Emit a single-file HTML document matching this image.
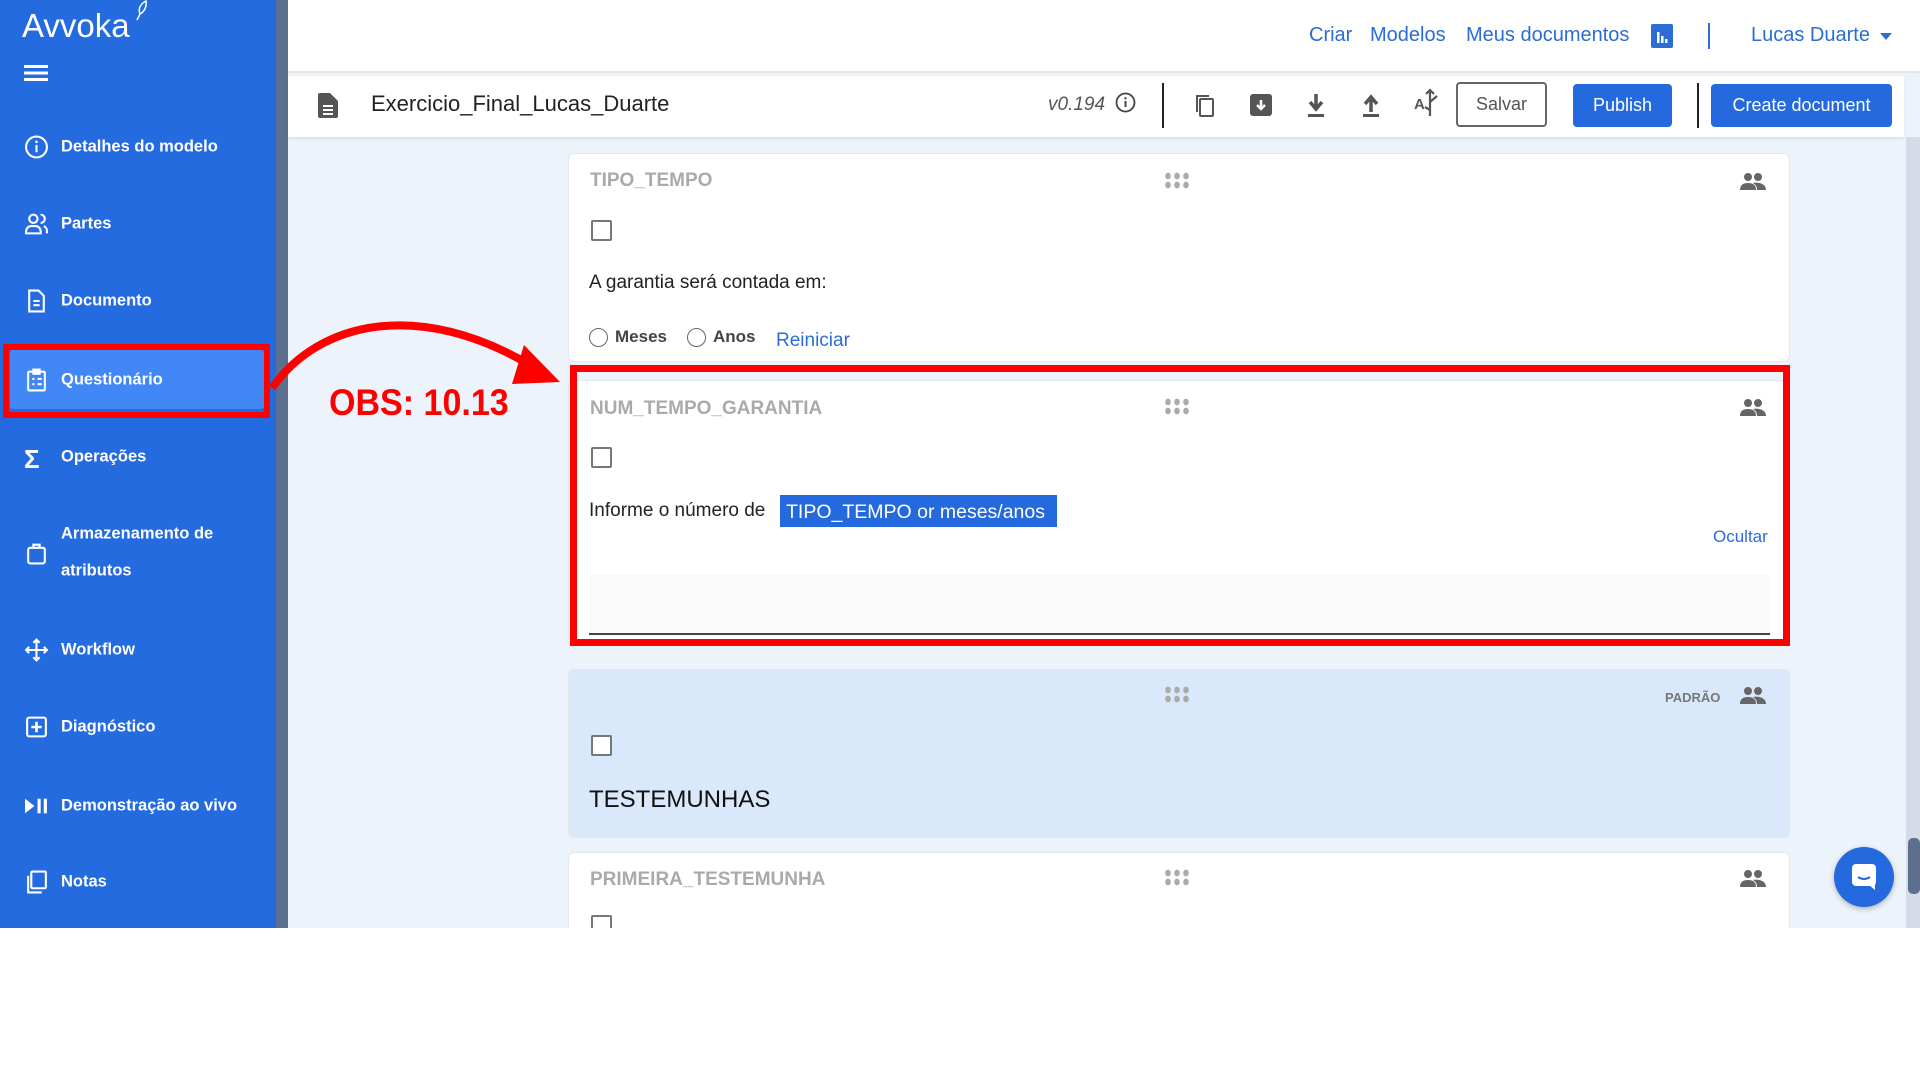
<!DOCTYPE html>
<html><head><meta charset="utf-8"><style>
*{box-sizing:border-box;margin:0;padding:0}
body{width:1920px;height:1080px;background:#fff;font-family:"Liberation Sans",sans-serif;position:relative;overflow:hidden}
.abs{position:absolute}
#side{left:0;top:0;width:276px;height:928px;background:#256be0}
#sb{left:276px;top:0;width:12px;height:928px;background:#5d6f8e}
#main{left:288px;top:0;width:1632px;height:928px;background:#edf3fb}
#hdr{left:288px;top:0;width:1632px;height:73px;background:#fff;border-bottom:2px solid #e6e6e6}
#tb{left:288px;top:76px;width:1616px;height:61px;background:#fff;box-shadow:0 2px 3px rgba(0,0,0,.08)}
.nav{color:#2c6cd6;font-size:20px;top:24px}
.mi{left:61px;color:#fff;font-size:16.5px;font-weight:bold;transform:translateY(-50%)}
.ic{left:24px;width:25px;height:25px;transform:translateY(-50%)}
.card{left:568px;width:1222px;background:#fff;border-radius:6px;border:1px solid #e3e8ef}
.lab{color:#aaa;font-size:19px;font-weight:bold}
.cb{width:21px;height:21px;border:2px solid #777;border-radius:2px;background:#fff}
.txt{font-size:19px;color:#222}
.btn{border-radius:4px;font-size:18px;display:flex;align-items:center;justify-content:center}
</style></head><body>
<div id="side" class="abs"></div>
<div id="sb" class="abs"></div>
<div id="main" class="abs"></div>
<div id="hdr" class="abs"></div>
<div id="tb" class="abs"></div>

<div class="abs" style="left:22px;top:7px;color:#fff;font-size:33px">Avvoka</div>
<svg class="abs" style="left:134px;top:0" width="16" height="22" fill="none" stroke="#fff" stroke-width="1.5"><path d="M12 1c-6 3-8 8-6 13 4-2 7-7 6-13zM6 14l-3 6"/></svg>
<svg class="abs" style="left:24px;top:64px" width="24" height="18"><rect y="1" width="24" height="3" fill="#fff"/><rect y="7.5" width="24" height="3" fill="#fff"/><rect y="14" width="24" height="3" fill="#fff"/></svg>

<div class="abs" style="left:10px;top:350px;width:254px;height:59px;background:#4188f6;border-radius:3px"></div>
<div class="abs" style="left:3px;top:344px;width:267px;height:74px;border:6px solid #ff0000"></div>

<svg class="abs ic" style="top:147px" viewBox="0 0 24 24"><circle cx="12" cy="12" r="10" fill="none" stroke="#fff" stroke-width="2"/><rect x="11" y="10" width="2" height="7" fill="#fff"/><circle cx="12" cy="7" r="1.3" fill="#fff"/></svg>
<div class="abs mi" style="top:147px">Detalhes do modelo</div>
<svg class="abs ic" style="top:224px" viewBox="0 0 24 24" fill="none" stroke="#fff" stroke-width="2"><circle cx="9" cy="7" r="4"/><path d="M2 21v-2a5 5 0 0 1 5-5h4a5 5 0 0 1 5 5v2z"/><path d="M16 3a4 4 0 0 1 0 8M19 14a5 5 0 0 1 3 5v2"/></svg>
<div class="abs mi" style="top:224px">Partes</div>
<svg class="abs ic" style="top:301px" viewBox="0 0 24 24" fill="none" stroke="#fff" stroke-width="2"><path d="M5 2h9l5 5v15H5z"/><path d="M9 12h6M9 16h6"/></svg>
<div class="abs mi" style="top:301px">Documento</div>
<svg class="abs ic" style="top:380px" viewBox="0 0 24 24" fill="none" stroke="#fff" stroke-width="2"><rect x="4" y="4" width="16" height="18" rx="1"/><rect x="9" y="2" width="6" height="4" fill="#fff"/><path d="M8 11h2M13 11h4M8 16h2M13 16h4"/></svg>
<div class="abs mi" style="top:380px">Questionário</div>
<div class="abs" style="left:24px;top:444px;color:#fff;font-size:26px;font-weight:bold">Σ</div>
<div class="abs mi" style="top:457px">Operações</div>
<svg class="abs ic" style="top:553px" viewBox="0 0 24 24" fill="none" stroke="#fff" stroke-width="2"><rect x="4" y="7" width="16" height="15" rx="2"/><path d="M9 7V4h6v3"/></svg>
<div class="abs mi" style="top:534px">Armazenamento de</div>
<div class="abs mi" style="top:571px">atributos</div>
<svg class="abs ic" style="top:650px" viewBox="0 0 24 24" fill="none" stroke="#fff" stroke-width="2"><path d="M12 2v20M2 12h20M9 5l3-3 3 3M9 19l3 3 3-3M5 9l-3 3 3 3M19 9l3 3-3 3"/></svg>
<div class="abs mi" style="top:650px">Workflow</div>
<svg class="abs ic" style="top:727px" viewBox="0 0 24 24"><rect x="3" y="3" width="18" height="18" rx="2" fill="none" stroke="#fff" stroke-width="2"/><path d="M12 7v10M7 12h10" stroke="#fff" stroke-width="2.5"/></svg>
<div class="abs mi" style="top:727px">Diagnóstico</div>
<svg class="abs ic" style="top:806px" viewBox="0 0 24 24" fill="#fff"><path d="M1 5l9 7-9 7z"/><rect x="13" y="5" width="3" height="14"/><rect x="19" y="5" width="3" height="14"/></svg>
<div class="abs mi" style="top:806px">Demonstração ao vivo</div>
<svg class="abs ic" style="top:882px" viewBox="0 0 24 24" fill="none" stroke="#fff" stroke-width="2"><rect x="7" y="2" width="14" height="16" rx="1"/><path d="M4 6v16h13"/></svg>
<div class="abs mi" style="top:882px">Notas</div>

<div class="abs nav" style="left:1309px">Criar</div>
<div class="abs nav" style="left:1370px">Modelos</div>
<div class="abs nav" style="left:1466px">Meus documentos</div>
<svg class="abs" style="left:1651px;top:24px" width="22" height="24"><rect width="22" height="24" rx="2" fill="#2c6cd6"/><rect x="6" y="8" width="2.5" height="11" fill="#fff"/><rect x="10" y="12" width="2.5" height="7" fill="#fff"/><rect x="14" y="15" width="2.5" height="4" fill="#fff"/></svg>
<div class="abs" style="left:1708px;top:23px;width:2px;height:26px;background:#2c6cd6"></div>
<div class="abs nav" style="left:1751px">Lucas Duarte</div>
<div class="abs" style="left:1880px;top:33px;width:0;height:0;border-left:6px solid transparent;border-right:6px solid transparent;border-top:7px solid #2c6cd6"></div>

<svg class="abs" style="left:318px;top:93px" width="20" height="25" viewBox="0 0 20 25"><path d="M0 2a2 2 0 0 1 2-2h10l8 8v15a2 2 0 0 1-2 2H2a2 2 0 0 1-2-2z" fill="#555"/><path d="M5 13h10M5 17h10M5 21h10" stroke="#fff" stroke-width="2"/></svg>
<div class="abs" style="left:371px;top:91px;font-size:22px;color:#222">Exercicio_Final_Lucas_Duarte</div>
<div class="abs" style="left:1048px;top:94px;font-size:19px;color:#555;font-style:italic">v0.194</div>
<svg class="abs" style="left:1115px;top:92px" width="21" height="21"><circle cx="10.5" cy="10.5" r="9" fill="none" stroke="#444" stroke-width="1.8"/><rect x="9.5" y="9" width="2" height="6" fill="#444"/><circle cx="10.5" cy="6.3" r="1.2" fill="#444"/></svg>
<div class="abs" style="left:1162px;top:83px;width:2px;height:45px;background:#222"></div>
<svg class="abs" style="left:1194px;top:93px" width="22" height="25" fill="none" stroke="#555" stroke-width="2"><rect x="6" y="6" width="13" height="17" rx="1"/><path d="M3 19V3h12"/></svg>
<svg class="abs" style="left:1249px;top:93px" width="24" height="24"><rect x="1" y="1" width="22" height="22" rx="3" fill="#555"/><path d="M12 7v9M8 12l4 4 4-4" stroke="#fff" stroke-width="2.5" fill="none"/></svg>
<svg class="abs" style="left:1305px;top:92px" width="22" height="26"><path d="M11 2v14M5 10l6 7 6-7" stroke="#555" stroke-width="3.5" fill="none"/><rect x="3" y="22" width="16" height="3" fill="#555"/></svg>
<svg class="abs" style="left:1360px;top:92px" width="22" height="26"><path d="M11 20V6M5 12l6-7 6 7" stroke="#555" stroke-width="3.5" fill="none"/><rect x="3" y="22" width="16" height="3" fill="#555"/></svg>
<div class="abs" style="left:1414px;top:96px;font-size:15px;font-weight:bold;color:#555">A</div>
<svg class="abs" style="left:1420px;top:88px" width="20" height="30" fill="none" stroke="#555" stroke-width="2.2"><path d="M10 2v26M6 6l4-4 4 4M10 14l7-6M10 22l-5-3"/></svg>
<div class="abs btn" style="left:1456px;top:82px;width:91px;height:45px;border:2px solid #666;color:#555">Salvar</div>
<div class="abs btn" style="left:1573px;top:84px;width:99px;height:43px;background:#2469de;color:#fff">Publish</div>
<div class="abs" style="left:1697px;top:83px;width:2px;height:45px;background:#222"></div>
<div class="abs btn" style="left:1711px;top:84px;width:181px;height:43px;background:#2469de;color:#fff">Create document</div>

<div class="abs" style="left:1906px;top:137px;width:14px;height:791px;background:#d5dce8"></div>
<div class="abs" style="left:1908px;top:838px;width:12px;height:56px;background:#5d6f8e;border-radius:5px"></div>

<div class="abs card" style="top:153px;height:209px"></div>
<div class="abs lab" style="left:590px;top:170px">TIPO_TEMPO</div>
<div class="abs cb" style="left:591px;top:220px"></div>
<div class="abs txt" style="left:589px;top:272px">A garantia será contada em:</div>
<div class="abs" style="left:589px;top:328px;width:19px;height:19px;border:1.5px solid #666;border-radius:50%"></div>
<div class="abs" style="left:615px;top:327px;font-size:17px;font-weight:bold;color:#444">Meses</div>
<div class="abs" style="left:687px;top:328px;width:19px;height:19px;border:1.5px solid #666;border-radius:50%"></div>
<div class="abs" style="left:713px;top:327px;font-size:17px;font-weight:bold;color:#444">Anos</div>
<div class="abs" style="left:776px;top:330px;font-size:19px;color:#2c6cd6">Reiniciar</div>

<div class="abs card" style="top:380px;height:263px"></div>
<div class="abs lab" style="left:590px;top:398px">NUM_TEMPO_GARANTIA</div>
<div class="abs cb" style="left:591px;top:447px"></div>
<div class="abs txt" style="left:589px;top:500px">Informe o número de</div>
<div class="abs" style="left:780px;top:495px;width:277px;height:32px;background:#2469de;color:#fff;font-size:19.5px;padding:6px 0 0 6px">TIPO_TEMPO or meses/anos</div>
<div class="abs" style="left:1713px;top:527px;font-size:17px;color:#2c6cd6">Ocultar</div>
<div class="abs" style="left:589px;top:575px;width:1181px;height:60px;background:#fafafa;border-bottom:2px solid #444"></div>
<div class="abs" style="left:570px;top:365px;width:1220px;height:281px;border:7px solid #ff0000"></div>

<div class="abs card" style="top:669px;height:169px;background:#dae8fc"></div>
<div class="abs" style="left:1665px;top:690px;font-size:13px;font-weight:bold;color:#777">PADRÃO</div>
<div class="abs cb" style="left:591px;top:735px"></div>
<div class="abs" style="left:589px;top:786px;font-size:24px;color:#111">TESTEMUNHAS</div>

<div class="abs card" style="top:852px;height:100px"></div>
<div class="abs lab" style="left:590px;top:869px">PRIMEIRA_TESTEMUNHA</div>
<div class="abs cb" style="left:591px;top:915px"></div>

<svg width="0" height="0" style="position:absolute"><defs>
<g id="grip" fill="#aaa"><ellipse cx="3" cy="4" rx="2.8" ry="3.4"/><ellipse cx="12" cy="4" rx="2.8" ry="3.4"/><ellipse cx="21" cy="4" rx="2.8" ry="3.4"/><ellipse cx="3" cy="13" rx="2.8" ry="3.4"/><ellipse cx="12" cy="13" rx="2.8" ry="3.4"/><ellipse cx="21" cy="13" rx="2.8" ry="3.4"/></g>
<g id="ppl" fill="#666"><circle cx="8" cy="5" r="4"/><circle cx="18" cy="5" r="4"/><path d="M0 18c0-5 3-7 8-7s8 2 8 7z"/><path d="M13 11c4-1 13 0 13 7h-9c0-3-1-5-4-7z"/></g>
</defs></svg>
<svg class="abs" style="left:1165px;top:172px" width="25" height="18"><use href="#grip"/></svg>
<svg class="abs" style="left:1740px;top:172px" width="27" height="19"><use href="#ppl"/></svg>
<svg class="abs" style="left:1165px;top:398px" width="25" height="18"><use href="#grip"/></svg>
<svg class="abs" style="left:1740px;top:398px" width="27" height="19"><use href="#ppl"/></svg>
<svg class="abs" style="left:1165px;top:686px" width="25" height="18"><use href="#grip"/></svg>
<svg class="abs" style="left:1740px;top:686px" width="27" height="19"><use href="#ppl"/></svg>
<svg class="abs" style="left:1165px;top:869px" width="25" height="18"><use href="#grip"/></svg>
<svg class="abs" style="left:1740px;top:869px" width="27" height="19"><use href="#ppl"/></svg>

<div class="abs" style="left:1834px;top:847px;width:60px;height:60px;border-radius:50%;background:#2469de;box-shadow:0 2px 6px rgba(0,0,0,.25)"></div>
<svg class="abs" style="left:1851px;top:863px" width="26" height="28"><rect x="1" y="1" width="24" height="22" rx="4" fill="#fff"/><path d="M18 22l6 5v-6z" fill="#fff"/><path d="M7 14q6 4 12 0" stroke="#2469de" stroke-width="2" fill="none"/></svg>

<svg class="abs" style="left:0;top:0" width="700" height="500"><path d="M272 388 C320 320 420 300 530 365" stroke="#ff0000" stroke-width="8" fill="none"/><path d="M524 345 L560 382 L512 384 Z" fill="#ff0000"/></svg>
<div class="abs" style="left:329px;top:382px;font-size:37px;font-weight:bold;color:#ff0000;transform:scaleX(0.92);transform-origin:left">OBS: 10.13</div>

<div class="abs" style="left:0;top:928px;width:1920px;height:152px;background:#fff"></div>
</body></html>
